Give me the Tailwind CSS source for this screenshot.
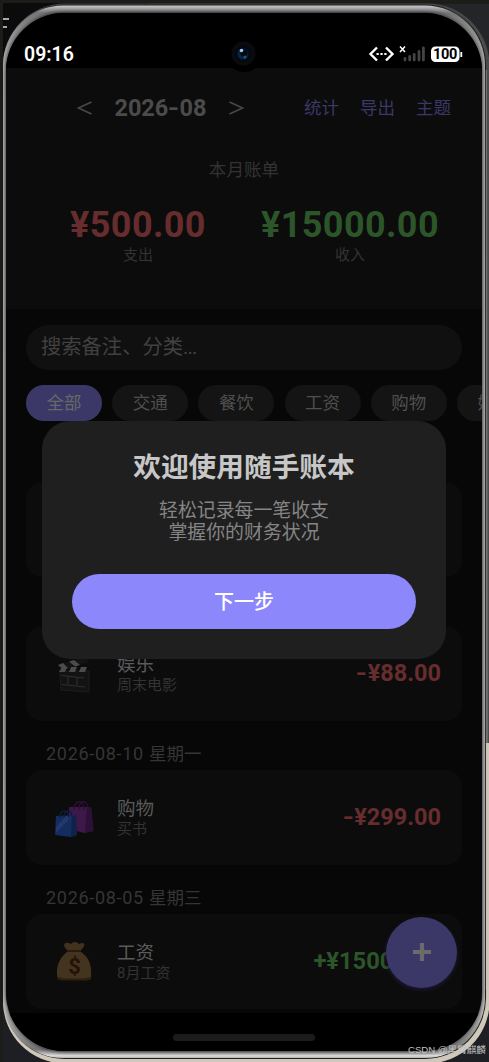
<!DOCTYPE html>
<html lang="zh-CN">
<head>
<meta charset="utf-8">
<title>随手账本</title>
<script src="https://cdn.jsdelivr.net/npm/@tailwindcss/browser@4"></script>
</head>
<body class="relative w-[489px] h-[1062px] overflow-hidden bg-[#1c1d18] font-['Roboto','Noto_Sans_CJK_SC',sans-serif]">
<!-- phone frame -->
<svg class="absolute inset-0" width="489" height="1062" viewBox="0 0 489 1062" fill="none">
  <defs>
    <linearGradient id="metal" x1="0" y1="5" x2="0" y2="1059" gradientUnits="userSpaceOnUse">
      <stop offset="0" stop-color="#d0cdd0"/><stop offset=".0075" stop-color="#777"/><stop offset=".06" stop-color="#bdbdbd"/><stop offset=".95" stop-color="#c4c4c4"/><stop offset=".991" stop-color="#777"/><stop offset=".997" stop-color="#e0e0e0"/><stop offset="1" stop-color="#999"/>
    </linearGradient>
    <linearGradient id="rim" x1="0" y1="0" x2="0" y2="1062" gradientUnits="userSpaceOnUse">
      <stop offset="0" stop-color="#484848"/><stop offset=".7" stop-color="#6c6c6c"/><stop offset=".7" stop-color="#d0c9ba"/><stop offset="1" stop-color="#d0c9ba"/>
    </linearGradient>
    <filter id="soft"><feGaussianBlur stdDeviation="2.5"/></filter>
  </defs>
  <path d="M3 3H150V120H3Z" fill="#0b0b0b"/>
  <path d="M340 4H489V120H340Z" fill="#242529"/>
  <path d="M0 960H489V1062H0Z" fill="#1d1f24"/>
  <path d="M0 0H3V1062H0ZM0 0H489V3H0Z" fill="#1c1d18"/>
  <path d="M3 19H9M3 27H7" stroke="#ddd" stroke-width="1.6"/>
  <rect x="3" y="3.500" width="486.500" height="1060" rx="62" fill="url(#rim)"/>
  <rect x="3.500" y="4.500" width="482.500" height="1054.500" rx="61" fill="#1f1f1f"/>
  <rect x="3" y="5.500" width="482" height="1052.500" rx="60" fill="url(#metal)"/>
  <path d="M486.500 70V743" stroke="#777"/><path d="M488.500 70V743" stroke="#4c4c4c"/>
  <path d="M485.500 70V990" stroke="#343434"/>
  <rect x="7.500" y="14.500" width="473" height="1035" rx="58" fill="#000" stroke="#000" stroke-width="3" filter="url(#soft)"/>
</svg>

<main class="relative ml-[6px] mt-[13px] w-[476px] h-[1038px] rounded-[58px] overflow-hidden bg-[#070707] flex flex-col">
  <!-- status bar -->
  <header class="relative h-[55px] shrink-0 bg-black flex items-center justify-between pl-[18px] pr-[18px] pt-[27px]">
    <span class="text-[19.5px] leading-[28px] font-semibold text-white pt-px">09:16</span>
    <svg width="96" height="20" viewBox="0 0 96 20" fill="none">
      <path d="M9 3.500L2.500 10L9 16.500M18 3.500L24.500 10L18 16.500" stroke="#fff" stroke-width="2.400"/>
      <path d="M8.500 10H18.500" stroke="#fff" stroke-width="2.200" stroke-dasharray="2.200 1.700"/>
      <path d="M32 2.500L37 8M37 2.500L32 8" stroke="#fff" stroke-width="1.500"/>
      <path d="M37 14.500V16M41.700 12.500V16M46.200 10.500V16M51 7.500V16M55.400 4V16" stroke="#444" stroke-width="2.800" stroke-linecap="round"/>
      <rect x="63" y="2.500" width="28.500" height="15.500" rx="4.500" fill="#fff"/><path d="M93.300 8V13" stroke="#fff" stroke-width="1.800"/>
      <text x="77.200" y="15.400" text-anchor="middle" textLength="24.500" font-family="Roboto" font-size="14.500" font-weight="700" fill="#000">100</text>
    </svg>
  </header>

  <!-- month summary -->
  <section class="h-[241px] shrink-0 bg-[#0c0c0c] flex flex-col">
    <div class="h-[80px] flex items-center">
      <div class="w-[167px] ml-[71px] flex items-center justify-between">
        <svg width="15" height="16" viewBox="0 0 15 16" fill="none" stroke="#464646" stroke-width="1.800"><path d="M14.500 2L1.500 8L14.500 14"/></svg>
        <b class="text-[23.5px] leading-[30px] whitespace-nowrap text-[#4b4b4b]">2026<span class="inline-block scale-x-125 mx-[1px]">-</span>08</b>
        <svg width="15" height="16" viewBox="0 0 15 16" fill="none" stroke="#464646" stroke-width="1.800"><path d="M.5 2L13.500 8L.5 14"/></svg>
      </div>
      <nav class="ml-[60px] flex gap-[21px] text-[17.5px] leading-[26px] text-[#3b3867] whitespace-nowrap">
        <a>统计</a><a>导出</a><a>主题</a>
      </nav>
    </div>
    <h2 class="h-[42px] pt-[8px] text-center text-[17.6px] leading-[28px] text-[#333]">本月账单</h2>
    <div class="pt-[12px] flex text-center">
      <div class="ml-[39px] w-[186px]"><div class="h-[46px] pt-px text-[36px] leading-[45px] font-bold tracking-[0.4px] text-[#672d2e]">¥500.00</div><div class="text-[15px] leading-[14px] text-[#333]">支出</div></div>
      <div class="w-[238px]"><div class="h-[46px] pt-px text-[36px] leading-[45px] font-bold tracking-[0.4px] text-[#2c562a]">¥15000.00</div><div class="text-[15px] leading-[14px] text-[#333]">收入</div></div>
    </div>
  </section>

  <!-- search -->
  <div class="mt-[16px] mx-[20px] h-[45px] shrink-0 rounded-full bg-[#101010] flex items-center pl-[15px] text-[20.3px] text-[#414141]"><span>搜索备注、分类<span class="tracking-[-0.8px]">...</span></span></div>

  <!-- categories -->
  <div class="mt-[15px] ml-[20px] h-[36px] shrink-0 flex gap-[10.2px] text-[17.5px] text-[#4f4f4f]">
    <span class="w-[76px] shrink-0 rounded-full bg-[#3b3867] text-[#676767] flex items-center justify-center">全部</span>
    <span class="w-[76px] shrink-0 rounded-full bg-[#141414] flex items-center justify-center">交通</span>
    <span class="w-[76px] shrink-0 rounded-full bg-[#141414] flex items-center justify-center">餐饮</span>
    <span class="w-[76px] shrink-0 rounded-full bg-[#141414] flex items-center justify-center">工资</span>
    <span class="w-[76px] shrink-0 rounded-full bg-[#141414] flex items-center justify-center">购物</span>
    <span class="w-[76px] shrink-0 rounded-full bg-[#141414] flex items-center justify-center">娱乐</span>
  </div>

  <!-- transactions -->
  <div class="h-[592px] shrink-0 px-[20px] pt-[61px] overflow-hidden">
    <article class="h-[95px] rounded-[16px] bg-[#0c0c0c]"></article>
    <div class="h-[49px]"></div>
    <article class="h-[95px] rounded-[16px] bg-[#0c0c0c] flex items-center pl-[28px] pr-[21px]">
      <svg width="42" height="42" viewBox="0 0 42 42" fill="none">
        <path d="M6 18H35V39L7 37Z" fill="#131313" stroke="#1d1d1d"/>
        <path d="M4 12L33 3L34 9L6 18Z" fill="#131313"/>
        <path d="M4 12L10 17L14 15L9 10ZM15 8.500L21 13.500L26 12L20 7ZM8 14L5 19H11L13 14ZM17 14L15 19H21L23 14ZM27 14L25 19H31L33 14Z" fill="#4c4c4c"/>
        <path d="M8 22.500L30 25M8 31.500L31 34M14 23V31M23 24.500V32" stroke="#303030"/>
      </svg>
      <div class="ml-[21px] pt-[2px]"><div class="text-[18.5px] leading-[21px] text-[#5a5a5a]">娱乐</div><div class="text-[15px] leading-[19px] text-[#333]">周末电影</div></div>
      <b class="ml-auto text-[23.5px] leading-[30px] -mt-[2px] text-[#672d2e]"><span class="inline-block scale-x-125 mr-px">-</span>¥88.00</b>
    </article>
    <h3 class="h-[49px] pl-[20px] pt-[20px] text-[17.5px] leading-[26px] text-[#353535]"><span class="text-[18px] tracking-[0.7px]">2026-08-10 </span>星期一</h3>
    <article class="h-[95px] rounded-[16px] bg-[#0c0c0c] flex items-center pl-[28px] pr-[21px]">
      <svg width="42" height="42" viewBox="0 0 42 42" fill="none">
        <path d="M15 10H37L39.500 34L30 36L15 32Z" fill="#3d1848"/><path d="M33 10L37 10L39.500 34L31 36Z" fill="#2d1036"/><path d="M20 13C20 2 30 2 30 13M25 13C24 3 34 1 34 13" stroke="#2c1035" stroke-width="1.300"/>
        <path d="M2 19L22 18L23 38L17 40L1 38Z" fill="#152c60"/><path d="M2 30L12 19H18L2 36Z" fill="#213a6a"/><path d="M18 19L22 18L23 38L17 40Z" fill="#10224a"/><path d="M6 21C6 12 14 11 15 21M10 20C10 12 18 12 18 20" stroke="#101c3e" stroke-width="1.300"/>
      </svg>
      <div class="ml-[21px] pt-[2px]"><div class="text-[18.5px] leading-[21px] text-[#5a5a5a]">购物</div><div class="text-[15px] leading-[19px] text-[#333]">买书</div></div>
      <b class="ml-auto text-[23.5px] leading-[30px] -mt-[2px] text-[#672d2e]"><span class="inline-block scale-x-125 mr-px">-</span>¥299.00</b>
    </article>
    <h3 class="h-[49px] pl-[20px] pt-[20px] text-[17.5px] leading-[26px] text-[#353535]"><span class="text-[18px] tracking-[0.7px]">2026-08-05 </span>星期三</h3>
    <article class="h-[95px] rounded-[16px] bg-[#0c0c0c] flex items-center pl-[28px] pr-[21px]">
      <svg width="42" height="42" viewBox="0 0 42 42" fill="none">
        <path d="M14 10C3 18 2 29 3.500 37Q4 39 8 39H33Q37 39 37 37C38 25 36 17 26 10Z" fill="#43341f"/><path d="M4 36Q3 39 8 39.500H33Q37 39 37 36Q30 38 20 37.500Q10 38 4 36Z" fill="#2e200e"/>
        <path d="M14 10C6 3 12 0 17 3C20 0 23 1 25 3C32 0 32 5 26 10Z" fill="#41321d"/><path d="M13 10H27" stroke="#2a1b0c" stroke-width="2.200"/>
        <text x="20.500" y="33" text-anchor="middle" font-family="Roboto" font-size="22" font-weight="700" fill="#241306">$</text>
      </svg>
      <div class="ml-[21px] pt-[2px]"><div class="text-[18.5px] leading-[21px] text-[#5a5a5a]">工资</div><div class="text-[15px] leading-[19px] text-[#333]">8月工资</div></div>
      <b class="ml-auto text-[23.7px] leading-[30px] -mt-[2px] text-[#2c562a]">+¥15000.00</b>
    </article>
  </div>

  <footer class="grow bg-black pt-[21px]"><div class="mx-auto w-[142px] h-[7px] rounded-full bg-[#1b1b1b]"></div></footer>
</main>

<!-- camera -->
<svg class="absolute left-[226px] top-[36px]" width="36" height="36" viewBox="0 0 36 36">
  <circle cx="18" cy="18" r="18" fill="#000"/><circle cx="17.500" cy="17.500" r="12" fill="#0b0b0d"/><circle cx="17.500" cy="17.500" r="8.500" fill="#030912"/>
  <circle cx="17" cy="18" r="5.500" fill="#0a2444"/><circle cx="18" cy="17" r="3.500" fill="#04080f"/><circle cx="15.500" cy="14.500" r="1.800" fill="#9cc8ee"/><circle cx="19" cy="21" r="1.500" fill="#245387"/>
</svg>

<!-- add button -->
<button class="absolute left-[386px] top-[917px] size-[71px] rounded-full bg-[#3b3867] shadow-[0_2px_4px_#1c1a38] flex items-center justify-center">
  <svg width="20" height="20" viewBox="0 0 20 20" stroke="#6b6b6b" stroke-width="4.200" class="mt-[-1px]"><path d="M10 1V19M1 10H19"/></svg>
</button>

<!-- welcome dialog -->
<section class="absolute left-[42px] top-[421px] w-[404px] h-[238px] rounded-[28px] bg-[#1f1f1f] flex flex-col items-center pt-[27px]">
  <h1 class="text-[27.7px] leading-[40px] font-bold text-[#c7c7c7]">欢迎使用随手账本</h1>
  <p class="mt-[12px] text-center text-[18.9px] leading-[22px] text-[#858585]">轻松记录每一笔收支<br>掌握你的财务状况</p>
  <button class="mt-[30px] w-[344px] h-[55px] rounded-full bg-[#8d87fc] text-white text-[20px] font-medium leading-[56px]">下一步</button>
</section>

<span class="absolute left-[408px] top-[1043px] font-['Liberation_Sans','Noto_Sans_CJK_SC',sans-serif] text-[9.6px] leading-[14px] whitespace-nowrap text-[#c2c2c2]">CSDN @黑臂麒麟</span>
</body>
</html>
